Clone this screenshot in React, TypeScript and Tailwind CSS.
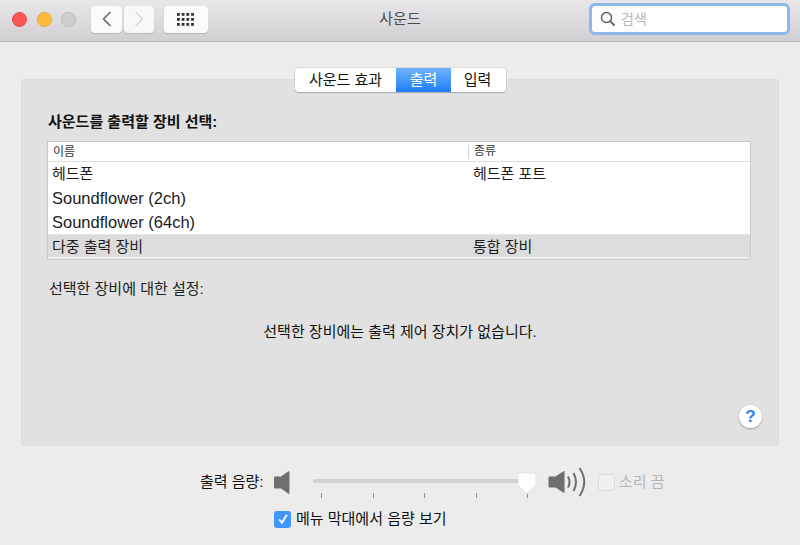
import React from "react";

const FONT = "font-['Liberation_Sans','Noto_Sans_CJK_KR',sans-serif]";

function Chevron({ color, d }: { color: string; d: string }) {
  return (
    <svg width="10" height="16" viewBox="0 0 10 16" fill="none">
      <path d={d} stroke={color} strokeWidth="1.4" />
    </svg>
  );
}

function Speaker({ className }: { className?: string }) {
  return (
    <svg width="16" height="23" viewBox="0 0 16 23" className={className}>
      <path d="M0 6.5 Q0 5.5 1 5.5 H7 L14.5 0.3 Q15.5 0 15.5 1 V22 Q15.5 23 14.5 22.7 L7 17.5 H1 Q0 17.5 0 16.5 Z" fill="#6f6f6f" />
    </svg>
  );
}

function SpeakerLoud() {
  return (
    <svg width="39" height="30" viewBox="0 0 39 30" fill="none">
      <path d="M0.5 10.5 Q0.5 9.5 1.5 9.5 H7.5 L15.5 4.2 Q16.5 3.8 16.5 4.8 V25.2 Q16.5 26.2 15.5 25.8 L7.5 20.5 H1.5 Q0.5 20.5 0.5 19.5 Z" fill="#6f6f6f" />
      <path d="M20 9.5 Q23 15 20 20.5" stroke="#6f6f6f" strokeWidth="2" />
      <path d="M25.5 6 Q30.5 15 25.5 24" stroke="#6f6f6f" strokeWidth="2" />
      <path d="M31.5 1 Q41 15 31.5 29" stroke="#6f6f6f" strokeWidth="2" />
    </svg>
  );
}

function Row({ a, b, selected, latin }: { a: string; b?: string; selected?: boolean; latin?: boolean }) {
  return (
    <div className={`flex items-center leading-6 text-[#1c1c1c] ${selected ? "h-[23px] border-t border-[#e6e6e6] bg-[#dcdcdc] pt-[2px]" : "h-6 bg-white"} ${latin ? "text-[16.5px]" : "text-[15px]"}`}>
      <div className="w-[421px] pl-[4px]">{a}</div>
      <div className="pl-[4px]">{b}</div>
    </div>
  );
}

export default function App() {
  return (
    <div className={`${FONT} flex h-[545px] w-[800px] flex-col overflow-hidden bg-[#ececec] text-black`}>
      {/* Title bar */}
      <header className="relative flex h-[42px] shrink-0 items-center border-b border-[#b9b7b9] bg-gradient-to-b from-[#e9e7e9] to-[#d1cfd1] pl-3 pb-[3px]">
        <div className="flex gap-[9.5px]">
          <span className="h-[15px] w-[15px] rounded-full border border-[#e8474a] bg-[#fc5753]" />
          <span className="h-[15px] w-[15px] rounded-full border border-[#e6a93a] bg-[#fdbc40]" />
          <span className="h-[15px] w-[15px] rounded-full border border-[#bdbbbd] bg-[#cfcdcf]" />
        </div>
        <div className="ml-[15px] flex gap-[2px]">
          <div className="flex h-[27px] w-[31px] items-center justify-center rounded-[4px] bg-[#fbfbfb] shadow-[0_1px_1px_#b5b3b5]">
            <Chevron color="#5a5a5a" d="M8.5 1 L1.5 8 L8.5 15" />
          </div>
          <div className="flex h-[27px] w-[30px] items-center justify-center rounded-[4px] bg-[#f8f8f8] shadow-[0_1px_1px_#b5b3b5]">
            <Chevron color="#d4d4d4" d="M1.5 1 L8.5 8 L1.5 15" />
          </div>
        </div>
        <div className="ml-[10px] flex h-[27px] w-[44px] items-center justify-center rounded-[4px] bg-[#fbfbfb] shadow-[0_1px_1px_#b5b3b5]">
          <svg width="18" height="13" viewBox="0 0 18 13" fill="#333">
            {[0, 5, 10].flatMap((y) =>
              [0, 4.7, 9.4, 14.1].map((x) => <rect key={`${x}-${y}`} x={x} y={y} width="2.8" height="2.8" />)
            )}
          </svg>
        </div>
        <div className="absolute left-1/2 top-[10px] -translate-x-1/2 text-[15px] leading-[18px] text-[#4a4a4a]">사운드</div>
        <div className="ml-auto mr-[10px] flex h-[32px] w-[201px] items-center rounded-[6px] border-[3.5px] border-[#8db8e8] bg-[#fdfdfd] pl-2">
          <svg width="16" height="16" viewBox="0 0 16 16" fill="none" stroke="#5c5c5c" strokeWidth="1.4">
            <circle cx="6.5" cy="6.5" r="5" />
            <path d="M10.2 10.2 L14.6 14.6" strokeWidth="1.8" />
          </svg>
          <span className="ml-[5px] text-[14px] text-[#b9b9b9]">검색</span>
        </div>
      </header>

      {/* Main panel */}
      <main className="relative mx-[21px] mt-[37px] flex h-[367px] shrink-0 flex-col rounded-[4px] border border-[#dbdbdb] bg-[#e1e1e1] px-[25px]">
        <div className="absolute left-[273px] top-[-12px] flex h-[24px] w-[211px] overflow-hidden rounded-[4px] bg-white text-[15px] shadow-[0_1px_1px_#a8a8a8,0_0_0_0.5px_#c8c8c8]">
          <div className="flex w-[101px] items-center justify-center text-[#111]">사운드 효과</div>
          <div className="flex w-[55px] items-center justify-center bg-gradient-to-b from-[#6cb3fa] to-[#1a7df8] text-white">출력</div>
          <div className="flex flex-1 items-center justify-center pr-[2px] text-[#111]">입력</div>
        </div>

        <h2 className="mt-[33px] pl-[1px] text-[15px] font-bold leading-[18px] text-[#111]">사운드를 출력할 장비 선택:</h2>

        <div className="mt-[10px] h-[119px] w-[704px] border border-[#c9c9c9] bg-white">
          <div className="flex h-[20px] items-center border-b border-[#dedede] text-[12px] leading-[20px] text-[#333]">
            <div className="w-[420px] pl-[5px]">이름</div>
            <div className="h-[14px] border-l border-[#d4d4d4] pl-[5px] leading-[13px]">종류</div>
          </div>
          <Row a="헤드폰" b="헤드폰 포트" />
          <Row a="Soundflower (2ch)" latin />
          <Row a="Soundflower (64ch)" latin />
          <Row a="다중 출력 장비" b="통합 장비" selected />
          <div className="h-[2px] bg-[#ececec]" />
        </div>

        <div className="mt-[20px] pl-[2px] text-[15px] leading-[18px] text-[#222]">선택한 장비에 대한 설정:</div>
        <div className="mt-[25px] text-center text-[15px] leading-[18px] text-[#111]">선택한 장비에는 출력 제어 장치가 없습니다.</div>

        <div className="mt-auto mb-[17px] ml-auto mr-[-9px] flex h-[23px] w-[23px] items-center justify-center rounded-full bg-white text-[17px] font-bold text-[#2f80f4] shadow-[0_1px_2px_#9a9a9a]">
          ?
        </div>
      </main>

      {/* Volume */}
      <section className="mt-[20px] flex h-[36px] items-start pl-[200px]">
        <span className="mt-[7px] w-[74px] text-[15px] leading-[18px] text-[#111]">출력 음량:</span>
        <Speaker className="mt-[5px]" />
        <div className="relative ml-[23px] h-[36px] w-[222px]">
          <div className="absolute left-0 right-0 top-[13px] h-[4px] rounded-full bg-[#d2d2d2]" />
          <div className="absolute left-[8px] top-[27px] flex w-[207px] justify-between">
            {[0, 1, 2, 3, 4].map((i) => (
              <span key={i} className="h-[5px] w-px bg-[#8e8e8e]" />
            ))}
          </div>
          <svg className="absolute left-[204px] top-[6px]" width="20" height="24" viewBox="0 0 20 24">
            <path d="M2.5 1 H17.5 Q19 1 19 2.5 V13 L10 22 L1 13 V2.5 Q1 1 2.5 1 Z" fill="#fdfdfd" stroke="#dcdcdc" strokeWidth="0.7" />
          </svg>
        </div>
        <div className="ml-[13px] mt-[1px]">
          <SpeakerLoud />
        </div>
        <span className="ml-[11px] mt-[8px] h-[17px] w-[17px] rounded-[3px] border border-[#dadada] bg-[#f0f0f0]" />
        <span className="ml-[4px] mt-[7px] text-[15px] leading-[18px] text-[#b5b5b5]">소리 끔</span>
      </section>

      <div className="mt-[8px] flex items-center pl-[274px]">
        <span className="flex h-[17px] w-[17px] items-center justify-center rounded-[3px] bg-[#3f97fb]">
          <svg width="12" height="12" viewBox="0 0 12 12" fill="none" stroke="white" strokeWidth="1.8">
            <path d="M2.2 6.5 L5 9.8 L9.8 1.8" />
          </svg>
        </span>
        <span className="ml-[5px] text-[15px] leading-[18px] text-[#111]">메뉴 막대에서 음량 보기</span>
      </div>
    </div>
  );
}
